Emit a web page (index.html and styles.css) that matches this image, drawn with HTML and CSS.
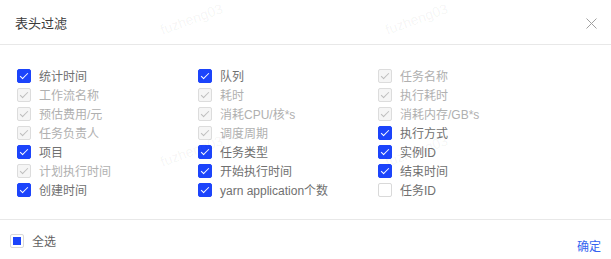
FILE: index.html
```html
<!DOCTYPE html>
<html lang="zh-CN">

<head>
    <meta charset="UTF-8">
    <meta name="viewport" content="width=device-width, initial-scale=1.0">
    <title>表头过滤</title>
    <link rel="stylesheet" href="styles.css">
</head>

<body>

    <div class="modal">
        <div class="modal-header">
            <span class="modal-title">表头过滤</span>
            <button class="close-btn" aria-label="关闭">
                <svg width="11" height="11" viewBox="0 0 11 11">
                    <path d="M0.5 0.5 L10.5 10.5 M10.5 0.5 L0.5 10.5" stroke="#a0a0a0" stroke-width="1" fill="none" />
                </svg>
            </button>
        </div>

        <div class="modal-body">
            <div class="column-list">
                <label class="item"><span class="box checked"></span>统计时间</label>
                <label class="item"><span class="box checked"></span>队列</label>
                <label class="item disabled"><span class="box checked"></span>任务名称</label>

                <label class="item disabled"><span class="box checked"></span>工作流名称</label>
                <label class="item disabled"><span class="box checked"></span>耗时</label>
                <label class="item disabled"><span class="box checked"></span>执行耗时</label>

                <label class="item disabled"><span class="box checked"></span>预估费用/元</label>
                <label class="item disabled"><span class="box checked"></span>消耗CPU/核*s</label>
                <label class="item disabled"><span class="box checked"></span>消耗内存/GB*s</label>

                <label class="item disabled"><span class="box checked"></span>任务负责人</label>
                <label class="item disabled"><span class="box checked"></span>调度周期</label>
                <label class="item"><span class="box checked"></span>执行方式</label>

                <label class="item"><span class="box checked"></span>项目</label>
                <label class="item"><span class="box checked"></span>任务类型</label>
                <label class="item"><span class="box checked"></span>实例ID</label>

                <label class="item disabled"><span class="box checked"></span>计划执行时间</label>
                <label class="item"><span class="box checked"></span>开始执行时间</label>
                <label class="item"><span class="box checked"></span>结束时间</label>

                <label class="item"><span class="box checked"></span>创建时间</label>
                <label class="item"><span class="box checked"></span>yarn application个数</label>
                <label class="item"><span class="box"></span>任务ID</label>
            </div>
        </div>

        <div class="modal-footer">
            <label class="item select-all"><span class="box partial"></span>全选</label>
            <button class="ok-btn">确定</button>
        </div>

        <!-- watermark layer -->
        <div class="watermark" aria-hidden="true">
            <span>fuzheng03</span><span>fuzheng03</span><span>fuzheng03</span>
            <span>fuzheng03</span><span>fuzheng03</span><span>fuzheng03</span>
        </div>
    </div>

</body>

</html>
```

FILE: styles.css
```css
body {
    margin: 0;
    font-family: 'Liberation Sans', 'Noto Sans CJK SC', sans-serif;
    background: #fff;
}

.modal {
    position: relative;
    width: 611px;
    height: 259px;
    overflow: hidden;
    background: #fff;
}

.modal-header {
    height: 45px;
    border-bottom: 1px solid #e8e8e8;
    display: flex;
    align-items: center;
    justify-content: space-between;
    padding: 0 14px 0 15px;
    box-sizing: border-box;
}

.modal-title {
    font-size: 13px;
    color: #3a3a3a;
    margin-top: 1px;
}

.close-btn {
    border: none;
    background: none;
    padding: 0;
    margin-top: 2px;
    width: 11px;
    height: 11px;
    display: flex;
    cursor: pointer;
}

.modal-body {
    padding: 21px 0 20px 17px;
}

.column-list {
    display: grid;
    grid-template-columns: 181px 180px 1fr;
    grid-auto-rows: 19px;
}

.item {
    display: flex;
    align-items: center;
    gap: 8px;
    font-size: 12px;
    color: #707070;
    white-space: nowrap;
}

.item.disabled {
    color: #b0b0b0;
}

.box {
    position: relative;
    width: 14px;
    height: 14px;
    box-sizing: border-box;
    border: 1px solid #d9d9d9;
    border-radius: 2px;
    background: #fff;
    flex-shrink: 0;
}

.box.checked {
    background: #1c44fb;
    border-color: #1c44fb;
}

.box.checked::after {
    content: "";
    position: absolute;
    left: 4px;
    top: 1px;
    width: 3px;
    height: 7px;
    border: solid #fff;
    border-width: 0 1.3px 1.3px 0;
    transform: rotate(45deg);
}

.disabled .box.checked {
    background: #f5f5f5;
    border-color: #dcdcdc;
}

.disabled .box.checked::after {
    border-color: #bdbdbd;
}

.box.partial::after {
    content: "";
    position: absolute;
    left: 2px;
    top: 2px;
    width: 8px;
    height: 8px;
    background: #1c44fb;
}

.modal-footer {
    border-top: 1px solid #e8e8e8;
    display: flex;
    justify-content: space-between;
    align-items: flex-start;
    padding: 12px 10px 0 10px;
}

.select-all {
    color: #606060;
}

.ok-btn {
    border: none;
    background: none;
    padding: 0;
    margin-top: 5px;
    font-family: inherit;
    font-size: 12px;
    color: #3463f0;
    cursor: pointer;
}

.watermark {
    position: absolute;
    top: -47px;
    left: 79px;
    display: grid;
    grid-template-columns: repeat(3, 225px);
    grid-auto-rows: 132px;
    pointer-events: none;
}

.watermark span {
    display: flex;
    align-items: center;
    justify-content: center;
    font-size: 14px;
    color: rgba(0, 0, 0, 0.055);
    transform: rotate(-20deg);
}
```
